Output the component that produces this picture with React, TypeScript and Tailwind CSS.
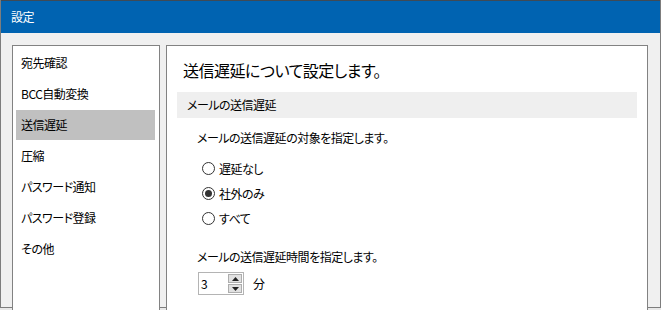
const menuItems = ["宛先確認", "BCC自動変換", "送信遅延", "圧縮", "パスワード通知", "パスワード登録", "その他"];
const delayOptions = ["遅延なし", "社外のみ", "すべて"];

function Radio({ checked }: { checked: boolean }) {
    return (
        <span className="w-[13px] h-[13px] rounded-full border border-[#333] bg-white flex items-center justify-center">
            {checked && <span className="w-[7px] h-[7px] rounded-full bg-[#333]" />}
        </span>
    );
}

function SpinBox({ value }: { value: number }) {
    return (
        <div className="w-[46px] h-[23px] border border-[#b4b4b4] bg-white flex items-stretch">
            <span className="flex-1 pl-[2px] text-[12px] leading-[21px]">{value}</span>
            <div className="w-[15px] flex flex-col gap-px py-px pr-px">
                <div className="flex-1 bg-[#e1e1e1] border border-[#adadad] flex items-center justify-center">
                    <svg width="7" height="4" viewBox="0 0 7 4"><path d="M3.5 0L7 4H0z" fill="#222" /></svg>
                </div>
                <div className="flex-1 bg-[#e1e1e1] border border-[#adadad] flex items-center justify-center">
                    <svg width="7" height="4" viewBox="0 0 7 4"><path d="M0 0h7L3.5 4z" fill="#222" /></svg>
                </div>
            </div>
        </div>
    );
}

export default function App() {
    const selected = "送信遅延";
    const delayMode = "社外のみ";

    return (
        <div className="w-[661px] h-[310px] bg-[#e8e8e8] overflow-hidden text-black font-['Noto_Sans_CJK_JP','Noto_Sans',sans-serif] [font-feature-settings:'palt'] tracking-[-0.5px]">
            <div className="h-[308px] flex flex-col border-l border-r border-b border-[#7d7d7d] bg-[#f0f0f0]">
                {/* title bar */}
                <div className="h-[33px] shrink-0 bg-[#0063b1] border-t border-[#3f4a55] flex items-center pl-[10px] text-white text-[12px]">
                    設定
                </div>

                <div className="flex-1 flex gap-[6px] pl-[11px] pr-[12px] pt-[12px] min-h-0">
                    {/* menu */}
                    <div className="w-[148px] h-[300px] shrink-0 bg-white border border-[#828282] pt-[2px] pl-[3px] pr-[4px] flex flex-col gap-px">
                        {menuItems.map((m) => (
                            <div
                                key={m}
                                className={`h-[30px] flex items-center pl-[5px] text-[12px] ${m === selected ? "bg-[#c0c0c0]" : ""}`}
                            >
                                {m}
                            </div>
                        ))}
                    </div>

                    {/* settings */}
                    <div className="flex-1 h-[300px] bg-white border border-[#828282] pt-[14px] px-[10px]">
                        <div className="pl-[6px] text-[16px] leading-[20px]">送信遅延について設定します。</div>

                        <div className="mt-[12px] h-[26px] bg-[#efefef] flex items-center pl-[10px] text-[12px]">
                            メールの送信遅延
                        </div>

                        <div className="pl-[20px]">
                            <div className="mt-[12px] text-[12px] leading-[16px]">メールの送信遅延の対象を指定します。</div>

                            <div className="mt-[10px] pl-[5px] flex flex-col">
                                {delayOptions.map((o) => (
                                    <div key={o} className="h-[25px] flex items-center gap-[4px] text-[12px]">
                                        <Radio checked={o === delayMode} />
                                        <span>{o}</span>
                                    </div>
                                ))}
                            </div>

                            <div className="mt-[18px] text-[12px] leading-[16px]">メールの送信遅延時間を指定します。</div>

                            <div className="mt-[7px] pl-px flex items-center gap-[9px] text-[12px]">
                                <SpinBox value={3} />
                                <span>分</span>
                            </div>
                        </div>
                    </div>
                </div>
            </div>
        </div>
    );
}
